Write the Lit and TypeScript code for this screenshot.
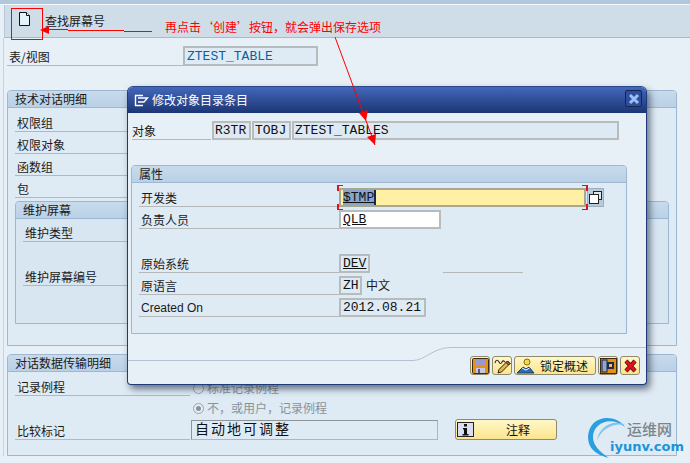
import { LitElement, html, css, svg } from "lit";
import { customElement } from "lit/decorators.js";

const Row = (label: string) => html`<div class="row"><span class="lbl">${label}</span></div>`;

@customElement("app-root")
export class AppRoot extends LitElement {
  static styles = css`
    :host { display: block; width: 690px; height: 463px; position: relative; overflow: hidden; background: #e8f0f7;
      font: 12px/16px "Noto Sans CJK SC", "Liberation Sans", sans-serif; color: #1a1a1a; }
    * { box-sizing: border-box; }
    .topbar { height: 4px; background: #b0c8de; }
    .sep { height: 1px; background: #f4f8fb; }
    .toolbar { height: 33px; margin-left: 4px; background: #cfdde8; border-bottom: 1px solid #a9b9c7; border-left: 1px solid #b9c8d6; display: flex; align-items: flex-start; }
    .newbtn { width: 38px; height: 30px; display: flex; justify-content: center; padding-top: 6px; }
    .toolbar .title { font-size: 12px; margin: 8px 0 0 2px; }
    .main { border-left: 1px solid #c6d4e0; margin-left: 3px; padding: 8px 13px 0 3px; }
    .row { display: flex; align-items: flex-end; height: 22px; position: relative; }
    .lbl { display: block; flex: 1; height: 19px; line-height: 20px; border-bottom: 1px solid #b4b8b8; padding-left: 2px; white-space: nowrap; }
    .tableRow { width: 311px; height: 20px; display: flex; }
    .tableRow .lbl { flex: 0 0 176px; height: 20px; line-height: 22px; }
    .fld { font: 13px/17px "Liberation Mono", monospace; height: 20px; border: 2px solid #b4bcc0; border-right-color: #b8bcbc; border-bottom-color: #b8bcbc; background: #dfebf4; padding-left: 2px; white-space: pre; color: #111; flex: none; }
    .disp { color: #0b5f9c; width: 135px; }
    .group { background: #deeaf4; border: 1px solid #9db7d2; border-radius: 4px 4px 0 0; position: relative; }
    .ghead { height: 17px; line-height: 16px; padding-left: 7px; background: linear-gradient(#c8dbec, #b9d0e6); border-bottom: 1px solid #9db7d2; border-radius: 3px 3px 0 0; }
    .g1 { margin-top: 24px; height: 256px; }
    .g1 .rows { padding: 2px 7px 0 7px; }
    .g1 .rows .row { width: 176px; }
    .sub { margin: 3px 7px 0 7px; height: 123px; background: #d8e6f2; }
    .subrows { padding: 1px 7px; }
    .subrows .row { width: 170px; }
    .gap { height: 22px; }
    .g2 { margin-top: 8px; height: 102px; }
    .g2body { display: grid; grid-template-columns: 175px auto; padding: 0 0 0 7px; }
    .g2 .l2 { grid-column: 1; height: 24px; display: flex; align-items: flex-end; }
    .radio { display: flex; align-items: center; gap: 3px; color: #8a9299; height: 20px; padding-top: 4px; margin-left: 3px; }
    .r1 { margin-top: 8px; height: 16px; padding-top: 0; }
    .dot { width: 11px; height: 11px; border: 1px solid #9aa3aa; border-radius: 50%; background: #e6eef5; display: flex; align-items: center; justify-content: center; }
    .dot i { width: 5px; height: 5px; border-radius: 50%; background: #8a9299; }
    .cmp { display: flex; align-items: flex-end; gap: 17px; margin-left: 1px; }
    .cmpfld { width: 247px; height: 20px; border: 1px solid #b0b6b8; border-top-color: #8e9396; border-left-color: #8e9396; background: #dfebf4; font-size: 14px; line-height: 14px; letter-spacing: 2px; padding-left: 3px; color: #111; }
    .sapbtn { height: 22px; border: 1px solid #8f8a6c; border-radius: 3px; background: linear-gradient(#fff7c8, #fbe58e); display: flex; align-items: center; color: #111; }
    .note { width: 102px; height: 21px; padding-left: 1px; }
    .note span { flex: 1; text-align: center; padding-left: 6px; }

    .dialog { position: absolute; left: 127px; top: 86px; width: 520px; height: 299px; background: #e8f0f7; border: 1px solid #1f3a78; border-top-color: #2b4a8c; border-radius: 6px 6px 4px 4px; box-shadow: 3px 4px 7px rgba(40, 50, 70, .65); }
    .dtitle { height: 26px; background: linear-gradient(#4467bb, #1b3674); color: #fff; border-radius: 5px 5px 0 0; display: flex; align-items: center; padding-left: 6px; gap: 3px; font-size: 12px; position: relative; }
    .close { position: absolute; right: 4px; top: 3px; width: 17px; height: 17px; border: 1px solid #14264f; border-radius: 2px; background: #2e4e9b; display: flex; align-items: center; justify-content: center; }
    .dbody { padding: 8px 0 0 4px; }
    .objrow { display: flex; gap: 1px; position: relative; height: 19px; }
    .objlbl { width: 79px; height: 19px; line-height: 20px; border-bottom: 1px solid #b4b8b8; }
    .objrow .fld { height: 19px; background: #deeaf3; border-color: #b8bcbc; padding-left: 1px; line-height: 15px; }
    .dgroup { margin: 25px 0 0 -1px; width: 496px; height: 169px; }
    .drows { padding: 2px 0 0 7px; }
    .drow { display: flex; align-items: flex-end; height: 22px; }
    .drow .lbl { flex: 0 0 200px; height: 18px; line-height: 18px; }
    .drow .fld { height: 19px; line-height: 15px; padding-left: 2px; }
    .u { text-decoration: underline; }
    .input { background: #fff; width: 102px; }
    .focus { background: #fff0a4; width: 247px; position: relative; border-color: #a8a890; }
    .sel { background: #8aa4cc; color: #111; border-right: 2px solid #14285a; }
    .corner { position: absolute; width: 6px; height: 6px; border: 0 solid #e0101c; }
    .tl { left: -4px; top: -5px; border-width: 1px 0 0 2px; }
    .tr { right: -4px; top: -5px; border-width: 1px 2px 0 0; }
    .bl { left: -4px; bottom: -5px; border-width: 0 0 1px 2px; }
    .br { right: -4px; bottom: -5px; border-width: 0 2px 1px 0; }
    .picker { width: 17px; height: 19px; margin-left: 1px; background: #b6cbe0; border: 1px solid #a0aebc; display: flex; align-items: center; justify-content: center; }
    .line { width: 80px; height: 1px; background: #b4b8b8; margin-left: 73px; }
    .cn { margin-left: 4px; height: 19px; line-height: 18px; }
    .en { font-family: "Liberation Sans", sans-serif; }
    .dfoot { position: absolute; left: 0; bottom: 0; width: 518px; height: 42px; }
    .dbtns { position: absolute; right: 6px; bottom: 9px; display: flex; gap: 2px; }
    .dbtns .sapbtn { height: 19px; width: 20px; justify-content: center; }
    .dbtns .wide { width: 82px; justify-content: flex-start; padding-left: 1px; gap: 5px; line-height: 16px; }

    .over { position: absolute; left: 0; top: 0; width: 690px; height: 463px; pointer-events: none; }
    .anno { position: absolute; left: 165px; top: 19px; color: #f00; white-space: nowrap; line-height: 16px; }
    .wm { position: absolute; left: 587px; top: 413px; width: 103px; height: 50px; }
    .logo { position: absolute; left: 0; top: 0; }
    .wm .a { position: absolute; left: 40px; top: 8px; color: #7a858c; font-size: 15px; font-weight: 500; }
    .wm .b { position: absolute; left: 23px; top: 25px; color: #1d93d8; font: bold 13px/18px "DejaVu Sans", sans-serif; white-space: nowrap; }
  `;

  render() {
    return html`
      <div class="topbar"></div><div class="sep"></div>
      <div class="toolbar">
        <div class="newbtn"><svg width="13" height="16" viewBox="0 0 13 16"><path d="M1.500 1.500h7l3 3v10h-10z" fill="#e6f2fa" stroke="#111"/><path d="M8.500 1.500v3h3" fill="#fff" stroke="#111"/></svg></div>
        <div class="title">查找屏幕号</div>
      </div>
      <div class="main">
        <div class="tableRow"><span class="lbl">表/视图</span><div class="fld disp">ZTEST_TABLE</div></div>
        <div class="group g1">
          <div class="ghead">技术对话明细</div>
          <div class="rows">
            ${Row("权限组")}${Row("权限对象")}${Row("函数组")}${Row("包")}
          </div>
          <div class="group sub">
            <div class="ghead">维护屏幕</div>
            <div class="subrows">
              ${Row("维护类型")}<div class="gap"></div>${Row("维护屏幕编号")}
            </div>
          </div>
        </div>
        <div class="group g2">
          <div class="ghead">对话数据传输明细</div>
          <div class="g2body">
            <div class="l2"><span class="lbl">记录例程</span></div>
            <div class="radio r1"><span class="dot"></span>标准记录例程</div>
            <div></div>
            <div class="radio"><span class="dot"><i></i></span>不，或用户，记录例程</div>
            <div class="l2"><span class="lbl">比较标记</span></div>
            <div class="cmp">
              <div class="cmpfld">自动地可调整</div>
              <div class="sapbtn note">
                <svg width="17" height="15" viewBox="0 0 17 15"><rect x=".5" y=".5" width="16" height="14" fill="#d9dff0" stroke="#223"/><rect x="7" y="2" width="3" height="2.500" fill="#111"/><path d="M6 6h4v6h1.500v1.500h-6V12H7V7.500H6z" fill="#111"/></svg>
                <span>注释</span>
              </div>
            </div>
          </div>
        </div>
      </div>

      <div class="dialog">
        <div class="dtitle">
          <svg width="15" height="13" viewBox="0 0 15 13"><path d="M9 1.500H1.500v10H9M4 4h9.500L10 8H4" fill="none" stroke="#fff" stroke-width="1.400"/></svg>
          修改对象目录条目
          <div class="close"><svg width="12" height="12" viewBox="0 0 12 12"><path d="M2 2l8 8M10 2l-8 8" stroke="#9cc0f5" stroke-width="3"/></svg></div>
        </div>
        <div class="dbody">
          <div class="objrow">
            <span class="objlbl">对象</span>
            <div class="fld" style="width:39px">R3TR</div>
            <div class="fld" style="width:39px">TOBJ</div>
            <div class="fld" style="width:327px">ZTEST_TABLES</div>
          </div>
          <div class="group dgroup">
            <div class="ghead">属性</div>
            <div class="drows">
              <div class="drow"><span class="lbl">开发类</span>
                <div class="fld focus"><span class="sel u">$TMP</span><i class="corner tl"></i><i class="corner tr"></i><i class="corner bl"></i><i class="corner br"></i></div>
                <div class="picker"><svg width="13" height="13" viewBox="0 0 13 13"><rect x="4.500" y=".5" width="8" height="8" fill="#dfe6ee" stroke="#222"/><rect x=".5" y="3.500" width="9" height="9" fill="#fff" stroke="#222"/></svg></div>
              </div>
              <div class="drow"><span class="lbl">负责人员</span><div class="fld input"><span class="u">QLB</span></div></div>
              <div class="gap"></div>
              <div class="drow"><span class="lbl">原始系统</span><div class="fld" style="width:31px"><span class="u">DEV</span></div><div class="line"></div></div>
              <div class="drow"><span class="lbl">原语言</span><div class="fld" style="width:23px">ZH</div><span class="cn">中文</span></div>
              <div class="drow"><span class="lbl en">Created On</span><div class="fld" style="width:87px">2012.08.21</div></div>
            </div>
          </div>
        </div>
        <svg class="dfoot" viewBox="0 0 518 42"><path d="M0 18.500H285c12 0 20-13 38-13H518" fill="none" stroke="#b3c2d2"/></svg>
        <div class="dbtns">
          <div class="sapbtn"><svg width="17" height="16" viewBox="0 0 17 16"><rect x=".5" y=".5" width="16" height="15" rx="1" fill="#e8900f" stroke="#3a2c10"/><rect x="3" y="2" width="11" height="6" fill="#9d97cf"/><rect x="4" y="10" width="9" height="5" fill="#c8c6e4"/><rect x="6" y="11" width="2" height="4" fill="#5a5490"/></svg></div>
          <div class="sapbtn"><svg width="17" height="16" viewBox="0 0 17 16"><path d="M1 5c1-4 3-3 4-1s2 2 3 0 2-1 3 0" fill="none" stroke="#333" stroke-width="1.200"/><path d="M13.500 3l2.500 2.500-8.500 8.500-3.500 1 1-3.500z" fill="#f2b63c" stroke="#222"/><path d="M13.500 3l2.500 2.500-1.500 1.500-2.500-2.500z" fill="#c85a4a" stroke="#222"/></svg></div>
          <div class="sapbtn wide"><svg width="19" height="16" viewBox="0 0 19 16"><circle cx="11" cy="4" r="3" fill="#f9d64a" stroke="#8a6d10"/><path d="M1 15l6-6 3 2 3-2 5 6z" fill="#2a6db0" stroke="#123a70"/><path d="M6 10l4 2 3.500-2" fill="none" stroke="#fff"/></svg><span>锁定概述</span></div>
          <div class="sapbtn"><svg width="17" height="16" viewBox="0 0 17 16"><rect x=".5" y=".5" width="16" height="15" fill="#e8900f" stroke="#3a2c10"/><rect x="2" y="2" width="5" height="12" fill="#8ea8d4" stroke="#223"/><path d="M7 4h7v7H7z" fill="#1e2a50"/><rect x="9" y="6" width="3" height="3" fill="#f4c060"/></svg></div>
          <div class="sapbtn"><svg width="15" height="14" viewBox="0 0 15 14"><path d="M3 2l9 10M12 2l-9 10" stroke="#4a1010" stroke-width="4.200"/><path d="M3 2l9 10M12 2l-9 10" stroke="#e0101c" stroke-width="2.800"/></svg></div>
        </div>
      </div>

      <svg class="over" viewBox="0 0 690 463">
        ${svg`
          <rect x="11.500" y="8.500" width="31" height="31" fill="none" stroke="#f00"/>
          <path d="M48 29.500H68M68 30.500H124M124 31.500H152" stroke="#f00" fill="none"/>
          <path d="M40 30l9-4v8z" fill="#f00"/>
          <path d="M335 37L375 145" stroke="#f00" fill="none"/>
          <path d="M359 113l9-3-2 11z" fill="#f00"/>
          <path d="M367 137l9-3-1 11z" fill="#f00"/>
        `}
      </svg>
      <div class="anno">再点击‘创建’按钮，就会弹出保存选项</div>
      <div class="wm">
        <svg class="logo" width="50" height="50" viewBox="0 0 50 50">
          <path d="M38 14C28 0 2 2 1 24 1 36 10 42 22 45 12 38 6 32 6 24 6 10 24 2 38 14z" fill="#2a9fe0"/>
          <path d="M38 12C28 6 12 12 10 28 14 16 26 10 38 12z" fill="#7cc6ec"/>
        </svg>
        <span class="a">运维网</span>
        <span class="b">iyunv.com</span>
      </div>
    `;
  }
}
